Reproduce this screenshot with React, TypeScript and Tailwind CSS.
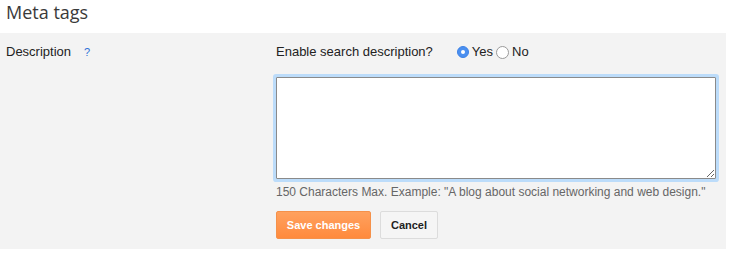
import React from "react";

export default function App() {
  return (
    <div className="w-[737px] h-[253px] bg-white" style={{ fontFamily: "Arial" }}>
      <div className="h-[33px] pl-[6px] text-[18px] leading-[25px] text-[#3a3a3a]" style={{ fontFamily: "'Open Sans', sans-serif" }}>
        Meta tags
      </div>
      <div className="w-[726px] h-[216px] bg-[#f3f3f3] flex">
        <div className="w-[276px] pl-[6px] pt-[11px] flex items-start font-['Liberation_Sans',Arial,sans-serif]">
          <span className="text-[13px] leading-[16px] text-[#222]">Description</span>
          <span className="ml-[13px] text-[11px] leading-[16px] text-[#2f6fd6]">?</span>
        </div>
        <div className="flex flex-col pt-[11px] font-['Liberation_Sans',Arial,sans-serif]">
          <div className="flex items-center h-[16px] text-[13px] text-[#222]">
            <span>Enable search description?</span>
            <span className="ml-[24px] w-[12px] h-[12px] rounded-full bg-[#4a8ff0] border border-[#3d82e6] flex items-center justify-center">
              <span className="w-[4px] h-[4px] rounded-full bg-white"></span>
            </span>
            <span className="ml-[3px]">Yes</span>
            <span className="ml-[3px] w-[13px] h-[13px] rounded-full bg-white border border-[#9a9a9a]"></span>
            <span className="ml-[3px]">No</span>
          </div>
          <textarea className="mt-[17px] w-[440px] h-[102px] bg-white border border-[#8a8a8a] outline-none shadow-[0_0_0_3px_#bcdcfa] rounded-[1px] resize"></textarea>
          <div className="mt-[6px] text-[12px] leading-[15px] text-[#666]">
            150 Characters Max. Example: "A blog about social networking and web design."
          </div>
          <div className="mt-[11px] flex gap-[9px]">
            <button className="w-[95px] h-[28px] rounded-[2px] text-white font-bold text-[11px] border border-[#f5914a] bg-gradient-to-b from-[#ffa15e] to-[#ff8a3c]">
              Save changes
            </button>
            <button className="w-[58px] h-[28px] rounded-[2px] text-[#222] font-bold text-[11px] border border-[#dcdcdc] bg-[#f5f5f5]">
              Cancel
            </button>
          </div>
        </div>
      </div>
    </div>
  );
}
